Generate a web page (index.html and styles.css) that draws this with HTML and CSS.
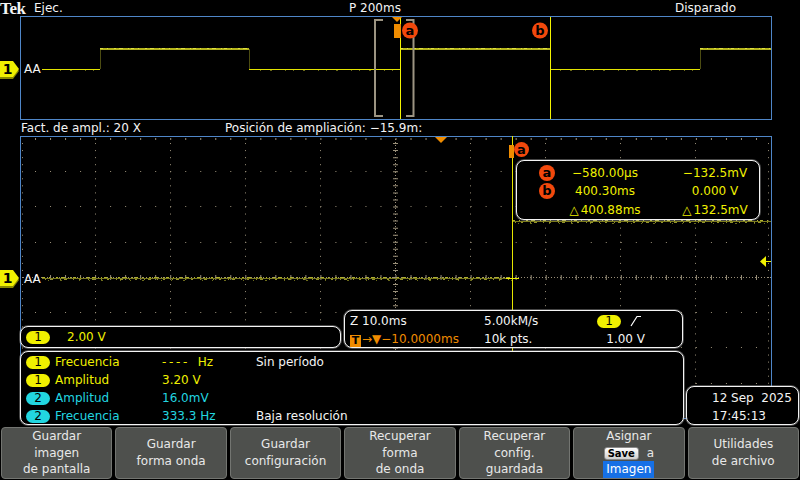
FILE: index.html
```html
<!DOCTYPE html>
<html lang="es">
<head>
<meta charset="utf-8">
<title>Tek</title>
<link rel="stylesheet" href="styles.css">
</head>
<body>
<div class="screen">
  <header class="status">
    <span class="tek">Tek</span>
    <span class="run">Ejec.</span>
    <span class="hpos">P 200ms</span>
    <span class="trig">Disparado</span>
  </header>

  <section class="overview">
    <svg class="canvas" width="800" height="104" viewBox="0 0 800 104">
      <rect x="20.5" y="0.5" width="751" height="103" fill="none" stroke="#4f86c8"/>
      <g stroke="#4c4c12">
        <line x1="100.5" y1="33" x2="100.5" y2="53"/>
        <line x1="249.5" y1="33" x2="249.5" y2="53"/>
        <line x1="700.5" y1="33" x2="700.5" y2="53"/>
      </g>
      <g stroke="#e2e200">
        <line x1="42" y1="53.5" x2="100" y2="53.5"/>
        <line x1="249" y1="53.5" x2="400" y2="53.5"/>
        <line x1="550" y1="53.5" x2="700" y2="53.5"/>
      </g>
      <g stroke="#6a6a18" stroke-dasharray="1 9 2 13 1 7">
        <line x1="60" y1="54.5" x2="100" y2="54.5"/>
        <line x1="260" y1="54.5" x2="400" y2="54.5"/>
        <line x1="560" y1="54.5" x2="700" y2="54.5"/>
      </g>
      <g stroke="#b4b41c" stroke-width="2">
        <line x1="100" y1="33" x2="249" y2="33"/>
        <line x1="400" y1="33" x2="550" y2="33"/>
        <line x1="700" y1="33" x2="771" y2="33"/>
      </g>
      <g stroke="#e0e040" stroke-dasharray="3 4 1 6 2 3 4 5 1 2">
        <line x1="100" y1="32.5" x2="249" y2="32.5"/>
        <line x1="400" y1="32.5" x2="550" y2="32.5"/>
        <line x1="700" y1="32.5" x2="771" y2="32.5"/>
      </g>
      <g fill="none" stroke="#9c9482" stroke-width="2">
        <path d="M383 4H375V100H383"/>
        <path d="M406 4H413.5V100H406"/>
      </g>
      <g stroke="#f4f400">
        <line x1="400.5" y1="1" x2="400.5" y2="103"/>
        <line x1="550.5" y1="1" x2="550.5" y2="103"/>
      </g>
      <polygon points="392,1 402,1 397,6" fill="#f08c00"/>
      <rect x="394" y="8" width="7" height="14" fill="#f08c00"/>
      <circle cx="410" cy="14.5" r="8" fill="#f2480c"/>
      <text x="410" y="18.5" class="curl">a</text>
      <circle cx="540" cy="14.5" r="8" fill="#f2480c"/>
      <text x="540" y="18.5" class="curl">b</text>
      <polygon points="0,47 13,47 19,55 13,63 0,63" fill="#8a8a00"/>
      <polygon points="0,45 13,45 19,53 13,61 0,61" fill="#f0f000"/>
      <text x="7.5" y="58" class="mk">1</text>
      <text x="24" y="56.5" class="gl">AA</text>
    </svg>
  </section>

  <div class="zoominfo">
    <span class="zf">Fact. de ampl.: 20 X</span>
    <span>Posición de ampliación: −15.9m:</span>
  </div>

  <section class="main">
    <svg class="canvas" width="800" height="291" viewBox="0 0 800 291">
      <g stroke="#9a907a" fill="none">
        <g stroke-dasharray="1 6.05">
          <line x1="95.5" y1="0" x2="95.5" y2="282"/>
          <line x1="170.5" y1="0" x2="170.5" y2="282"/>
          <line x1="245.5" y1="0" x2="245.5" y2="282"/>
          <line x1="320.5" y1="0" x2="320.5" y2="282"/>
          <line x1="470.5" y1="0" x2="470.5" y2="282"/>
          <line x1="545.5" y1="0" x2="545.5" y2="282"/>
          <line x1="620.5" y1="0" x2="620.5" y2="282"/>
          <line x1="695.5" y1="0" x2="695.5" y2="282"/>
          <line x1="22.5" y1="0" x2="22.5" y2="282"/>
          <line x1="768.5" y1="0" x2="768.5" y2="282"/>
        </g>
        <g stroke-dasharray="1 14.02">
          <line x1="20" y1="35.5" x2="771" y2="35.5"/>
          <line x1="20" y1="70.5" x2="771" y2="70.5"/>
          <line x1="20" y1="106.5" x2="771" y2="106.5"/>
          <line x1="20" y1="176.5" x2="771" y2="176.5"/>
          <line x1="20" y1="211.5" x2="771" y2="211.5"/>
          <line x1="20" y1="247.5" x2="771" y2="247.5"/>
        </g>
        <g stroke-dasharray="1 14.02" stroke-width="2">
          <line x1="20" y1="3" x2="771" y2="3"/>
          <line x1="20" y1="280" x2="771" y2="280"/>
        </g>
        <line x1="20" y1="141.5" x2="771" y2="141.5" stroke-dasharray="1 2"/>
        <line x1="20" y1="141.5" x2="771" y2="141.5" stroke-width="5" stroke-dasharray="1 14.02"/>
        <line x1="395.5" y1="0" x2="395.5" y2="282" stroke-dasharray="1 2"/>
        <line x1="395.5" y1="0" x2="395.5" y2="282" stroke-width="5" stroke-dasharray="1 6.05"/>
      </g>
      <rect x="20.5" y="0.5" width="751" height="282" fill="none" stroke="#4f86c8"/>

      <g stroke="#7a7a1c">
        <line x1="42" y1="142.5" x2="512" y2="142.5"/>
        <line x1="512" y1="85.5" x2="771" y2="85.5"/>
      </g>
      <g stroke="#b0b030" stroke-dasharray="3 4 1 6 2 3 4 5 1 2">
        <line x1="42" y1="141.5" x2="512" y2="141.5"/>
        <line x1="512" y1="84.5" x2="771" y2="84.5"/>
      </g>
      <g stroke="#94942a" stroke-dasharray="1 5 2 7 1 3 3 6">
        <line x1="45" y1="143.5" x2="512" y2="143.5"/>
        <line x1="515" y1="86.5" x2="771" y2="86.5"/>
      </g>
      <g stroke="#6c6c1c" stroke-dasharray="1 11 2 17 1 9">
        <line x1="48" y1="144.5" x2="512" y2="144.5"/>
        <line x1="518" y1="87.5" x2="771" y2="87.5"/>
      </g>

      <line x1="512.5" y1="0" x2="512.5" y2="282" stroke="#e6e600"/>
      <line x1="506" y1="142.5" x2="519" y2="142.5" stroke="#f0f000"/>
      <rect x="509" y="9" width="5" height="13" fill="#f08c00"/>
      <circle cx="521.5" cy="13.5" r="7.5" fill="#f2480c"/>
      <text x="521.5" y="17.5" class="curl">a</text>

      <polygon points="435,1 447,1 441,7" fill="#f08c00"/>
      <polygon points="760,125.5 766,120 766,131" fill="#f0f000"/>
      <line x1="766" y1="125.5" x2="771" y2="125.5" stroke="#f0f000"/>

      <polygon points="0,136 13,136 19,144 13,152 0,152" fill="#8a8a00"/>
      <polygon points="0,134 13,134 19,142 13,150 0,150" fill="#f0f000"/>
      <text x="7.5" y="147" class="mk">1</text>
      <text x="24" y="146.5" class="gl">AA</text>
    </svg>

    <div class="readout">
      <span class="cur">a</span><span>−580.00µs</span><span class="v2">−132.5mV</span>
      <span class="cur">b</span><span>400.30ms</span><span class="v2">0.000 V</span>
      <span></span><span><span class="tri">△</span>400.88ms</span><span class="v2"><span class="tri">△</span>132.5mV</span>
    </div>

    <div class="prow r1">
      <div class="box chbox">
        <span class="pill y">1</span><span class="yel chv">2.00 V</span>
      </div>
      <div class="box tbox">
        <span>Z 10.0ms</span>
        <span>5.00kM/s</span>
        <span class="trigsrc"><span class="pill y">1</span><svg class="slope" width="12" height="12" viewBox="0 0 12 12"><path d="M1 11L7 1.5H11" fill="none" stroke="#fff" stroke-width="1.2"/></svg></span>
        <span class="org"><span class="tbox-t">T</span>→▼−10.0000ms</span>
        <span>10k pts.</span>
        <span class="lvl">1.00 V</span>
      </div>
    </div>

    <div class="prow r2">
      <div class="box meas">
        <span class="pill y">1</span><span class="yel">Frecuencia</span><span class="yel"><span class="dashes">----</span>&nbsp; Hz</span><span>Sin período</span>
        <span class="pill y">1</span><span class="yel">Amplitud</span><span class="yel">3.20 V</span><span></span>
        <span class="pill c">2</span><span class="cya">Amplitud</span><span class="cya">16.0mV</span><span></span>
        <span class="pill c">2</span><span class="cya">Frecuencia</span><span class="cya">333.3 Hz</span><span>Baja resolución</span>
      </div>
      <div class="box date">
        <span>12 Sep&nbsp; 2025</span>
        <span>17:45:13</span>
      </div>
    </div>
  </section>

  <nav class="menu">
    <div class="btn"><span>Guardar</span><span>imagen</span><span>de pantalla</span></div>
    <div class="btn"><span>Guardar</span><span>forma onda</span></div>
    <div class="btn"><span>Guardar</span><span>configuración</span></div>
    <div class="btn"><span>Recuperar</span><span>forma</span><span>de onda</span></div>
    <div class="btn"><span>Recuperar</span><span>config.</span><span>guardada</span></div>
    <div class="btn"><span>Asignar</span><span><span class="savekey">Save</span> a</span><span class="hl">Imagen</span></div>
    <div class="btn"><span>Utilidades</span><span>de archivo</span></div>
  </nav>
</div>
</body>
</html>
```

FILE: styles.css
```css
* { box-sizing: border-box; margin: 0; padding: 0; }

html, body {
  width: 800px;
  height: 480px;
  background: #000;
  overflow: hidden;
}

body {
  font-family: "DejaVu Sans", sans-serif;
  font-size: 12px;
  color: #f4f4f4;
}

.screen {
  display: flex;
  flex-direction: column;
  width: 800px;
  height: 480px;
}

/* status bar */
.status {
  display: flex;
  height: 16px;
  flex: none;
}
.status span {
  line-height: 17px;
  white-space: nowrap;
}
.status .tek {
  width: 34px;
  font-family: "Liberation Serif", serif;
  font-weight: bold;
  font-size: 17px;
  line-height: 17px;
  letter-spacing: -0.4px;
}
.run { width: 315px; }
.hpos { width: 326px; }

/* overview */
.overview {
  position: relative;
  height: 104px;
  flex: none;
}
.canvas {
  position: absolute;
  left: 0;
  top: 0;
  display: block;
}
.curl {
  font-family: "DejaVu Sans", sans-serif;
  font-weight: bold;
  font-size: 13px;
  fill: #000;
  text-anchor: middle;
}
.mk {
  font-family: "DejaVu Sans", sans-serif;
  font-weight: bold;
  font-size: 14px;
  fill: #000;
  text-anchor: middle;
}
.gl {
  font-family: "DejaVu Sans", sans-serif;
  font-size: 12px;
  fill: #f4f4f4;
}

.zoominfo {
  display: flex;
  height: 16px;
  line-height: 16px;
  padding-left: 21px;
  flex: none;
  white-space: nowrap;
}
.zf { width: 204px; }

/* main graticule */
.main {
  position: relative;
  height: 291px;
  flex: none;
  display: flex;
  flex-direction: column;
  justify-content: flex-end;
  gap: 3px;
  padding: 0 0 2px 20px;
}

.box {
  position: relative;
  z-index: 1;
  background: #000;
  border: 1px solid #f4f4f4;
  border-radius: 8px;
  box-shadow: 0 0 0 1px rgba(200, 200, 200, 0.35);
  white-space: nowrap;
}

.readout {
  position: absolute;
  left: 516px;
  top: 24px;
  width: 244px;
  height: 60px;
  z-index: 1;
  background: #000;
  border: 1px solid #f4f4f4;
  border-radius: 8px;
  box-shadow: 0 0 0 1px rgba(200, 200, 200, 0.35);
  padding: 2.6px 0 0 22px;
  display: grid;
  grid-template-columns: 16px 100px 104px;
  line-height: 18.5px;
  color: #f0f000;
  text-align: center;
  white-space: nowrap;
}
.readout .v2 { padding-left: 16px; }
.cur {
  align-self: center;
  width: 16px;
  height: 16px;
  border-radius: 50%;
  background: #f2480c;
  color: #000;
  font-weight: bold;
  font-size: 13px;
  line-height: 15px;
  text-align: center;
}
.tri { letter-spacing: 2px; }

.prow {
  display: flex;
  align-items: flex-end;
}
.r1 { gap: 3px; }
.r2 { gap: 2px; }

.pill {
  display: inline-block;
  width: 24px;
  height: 13px;
  border-radius: 7px;
  color: #000;
  text-align: center;
  line-height: 13px;
  font-size: 12px;
}
.pill.y { background: #f0f000; }
.pill.c { background: #22d6e0; }

.yel { color: #f0f000; }
.cya { color: #22d6e0; }
.org { color: #f08c00; }

.chbox {
  width: 321px;
  height: 22px;
  display: flex;
  align-items: center;
  padding-left: 5px;
  line-height: 18px;
}
.chv { margin-left: 17px; }

.tbox {
  width: 339px;
  height: 38px;
  padding: 1px 0 0 5px;
  display: grid;
  grid-template-columns: 134px 113px 48px;
  grid-auto-rows: 18px;
  line-height: 18px;
}
.trigsrc {
  display: flex;
  align-items: center;
  gap: 9px;
}
.slope { display: block; }
.lvl { text-align: right; }
.tbox-t {
  display: inline-block;
  width: 11px;
  height: 12px;
  margin-right: 1px;
  background: #f08c00;
  color: #000;
  font-weight: bold;
  font-size: 11px;
  line-height: 12px;
  text-align: center;
  vertical-align: -1px;
}

.meas {
  width: 664px;
  height: 74px;
  padding: 1px 0 0 5px;
  display: grid;
  grid-template-columns: 29px 107px 94px 1fr;
  grid-auto-rows: 18px;
  line-height: 18px;
  align-items: center;
}
.dashes { letter-spacing: 2.7px; }

.date {
  width: 113px;
  height: 39px;
  padding: 2px 0 0 25px;
  display: flex;
  flex-direction: column;
  line-height: 18px;
}

/* bottom menu */
.menu {
  display: grid;
  grid-template-columns: repeat(7, 1fr);
  column-gap: 3px;
  height: 53px;
  padding: 0 1px 2px 1px;
  flex: none;
}
.btn {
  background: #4e504d;
  border: 1px solid #737571;
  border-radius: 4px;
  display: flex;
  flex-direction: column;
  justify-content: center;
  align-items: center;
  text-align: center;
  color: #e8e8e8;
  line-height: 16.5px;
  white-space: nowrap;
}
.savekey {
  display: inline-block;
  height: 13px;
  padding: 0 3px;
  border: 1px solid #8a8a8a;
  border-radius: 3px;
  background: linear-gradient(#ffffff, #cfcfcf);
  color: #000;
  font-weight: bold;
  font-size: 10px;
  line-height: 11px;
  vertical-align: 0;
  margin-right: 4px;
}
.hl {
  background: #1670e6;
  color: #fff;
  padding: 0 3px;
}
```
